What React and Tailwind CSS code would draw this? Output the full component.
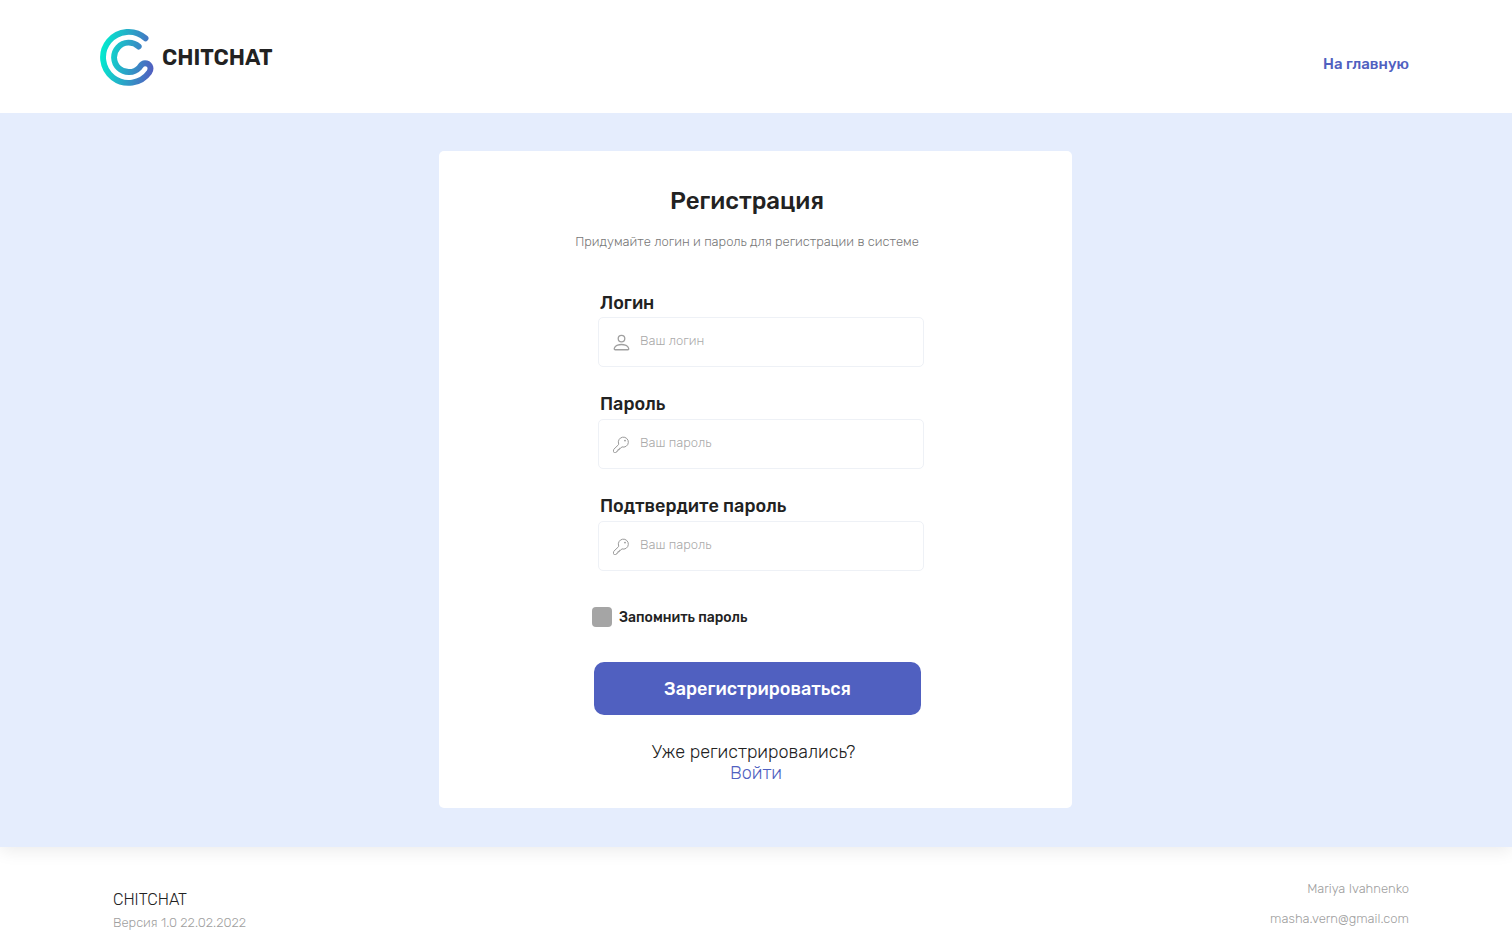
import { BsPerson } from "react-icons/bs";

function Logo() {
  return (
    <svg className="h-[58px] w-[56px] shrink-0" viewBox="0 0 56 58" fill="none">
      <defs>
        <linearGradient id="brand" x1="1" y1="28" x2="54" y2="36" gradientUnits="userSpaceOnUse">
          <stop stopColor="#02eccf" />
          <stop offset="1" stopColor="#5060c0" />
        </linearGradient>
      </defs>
      <path
        d="M46.500 10.300A25.500 25.500 0 1 0 50.300 44.200C53.200 39.500 50.200 35.200 46 35.200C43 35.200 41.800 37.500 40.500 39.400A14.700 14.700 0 1 1 39.700 18.500"
        stroke="url(#brand)"
        strokeWidth="5.900"
        strokeLinecap="round"
        strokeLinejoin="round"
      />
    </svg>
  );
}

function KeyIcon() {
  return (
    <svg className="ml-px mt-[2px] h-[18px] w-[20px] text-[#999999]" viewBox="0 0 20 18" fill="none">
      <path
        d="M6.700 8A5 5 0 1 1 9.800 10.900L8.700 12.300H7.400V13.600L5.900 13.700V15L4.700 15.300V16Q4.400 16.500 3.700 16.500H2.500Q1.500 16.500 1.500 15.500V14.100Q1.500 13.600 1.900 13.200L6.600 8.600Z"
        stroke="currentColor"
        strokeWidth="1"
        strokeLinejoin="round"
      />
      <circle cx="13" cy="4.600" r="0.900" fill="currentColor" />
    </svg>
  );
}

function Field({ label, placeholder, icon, type, labelClass = "leading-[25px]" }) {
  return (
    <label className="block h-[102px] w-[326px]">
      <span className={`block h-[27px] whitespace-nowrap pl-[2px] text-[18px] font-medium ${labelClass}`}>{label}</span>
      <span className="flex h-[50px] items-center rounded-[5px] border border-[#eef1f6] pl-[12px]">
        {icon}
        <input
          type={type}
          placeholder={placeholder}
          className="ml-[8px] mb-[3px] w-[250px] bg-transparent text-[13px] font-light leading-[16px] outline-none placeholder:text-[#aaaaaa]"
        />
      </span>
    </label>
  );
}

export default function App() {
  return (
    <div className="flex h-[952px] w-[1512px] flex-col overflow-hidden bg-white font-['Rubik','Roboto',sans-serif] text-[#222222]">
      <header className="relative z-10 flex h-[113px] shrink-0 justify-between bg-white pl-[99px] pr-[103px]">
        <div className="mt-[28px] flex h-[58px] items-center">
          <Logo />
          <span className="ml-[7px] pt-[2px] text-[22px] font-semibold leading-[26px]">CHITCHAT</span>
        </div>
        <a href="#" className="mt-[54px] h-5 text-[15px] font-medium leading-5 text-[#5060c0]">
          На главную
        </a>
      </header>

      <main className="relative flex h-[734px] shrink-0 justify-center bg-[#e5edfd] pt-[38px] pr-px shadow-[0_4px_16px_rgba(0,0,0,0.08)]">
        <form className="flex h-[657px] w-[633px] flex-col rounded-[5px] bg-white pt-[35px]">
          <h1 className="mr-[17px] text-center text-[24px] font-medium leading-[30px]">Регистрация</h1>
          <p className="mr-[17px] mt-[18px] text-center text-[13px] font-light leading-[16px] text-[#777777]">
            Придумайте логин и пароль для регистрации в системе
          </p>

          <div className="ml-[159px] mt-[40px] flex h-[306px] flex-col">
            <Field
              label="Логин"
              labelClass="leading-[27px]"
              placeholder="Ваш логин"
              type="text"
              icon={<BsPerson className="size-[21px] text-[#a0a0a0]" />}
            />
            <Field label="Пароль" placeholder="Ваш пароль" type="password" icon={<KeyIcon />} />
            <Field label="Подтвердите пароль" placeholder="Ваш пароль" type="password" icon={<KeyIcon />} />
          </div>

          <label className="ml-[153px] mt-[11px] flex h-5 items-center">
            <input type="checkbox" className="size-5 appearance-none rounded-[4px] bg-[#a5a5a5]" />
            <span className="ml-[7px] pt-[2px] text-[14px] font-medium leading-5">Запомнить пароль</span>
          </label>

          <button
            type="button"
            className="ml-[155px] mt-[35px] h-[53px] w-[327px] shrink-0 rounded-[10px] bg-[#5060c0] pt-[2px] text-[18px] font-medium text-white"
          >
            Зарегистрироваться
          </button>

          <div className="mr-[4px] mt-[27px] text-center text-[18px] font-light leading-[21px]">
            <p>Уже регистрировались?</p>
            <a href="#" className="ml-[5px] text-[#5060c0]">Войти</a>
          </div>
        </form>
      </main>

      <footer className="flex grow justify-between pl-[113px] pr-[103px]">
        <div className="pt-[43px]">
          <p className="text-[16px] font-light leading-[20px]">CHITCHAT</p>
          <p className="mt-[4px] text-[13px] font-light leading-[18px] text-[#a0a0a0]">Версия 1.0 22.02.2022</p>
        </div>
        <div className="pt-[32px] text-right text-[13px] font-light leading-[20px] text-[#a0a0a0]">
          <p>Mariya Ivahnenko</p>
          <p className="mt-[10px]">masha.vern@gmail.com</p>
        </div>
      </footer>
    </div>
  );
}
